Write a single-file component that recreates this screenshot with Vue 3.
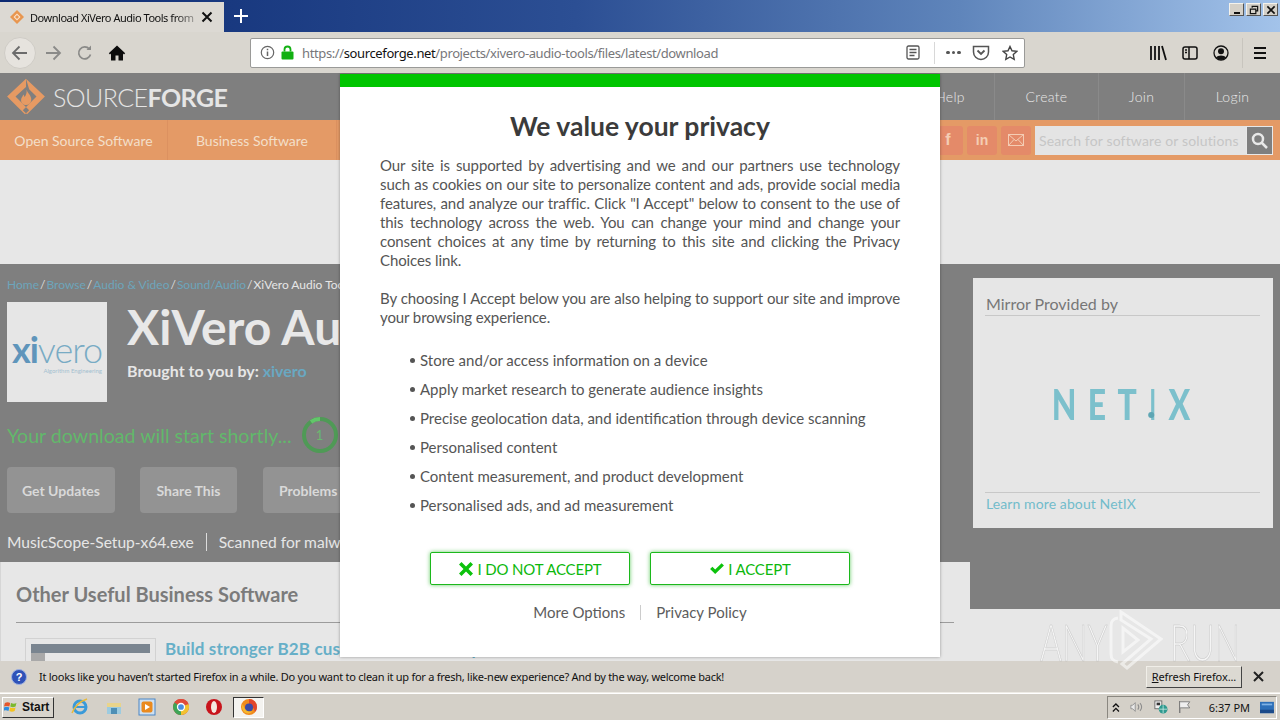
<script setup>
const consentItems = [
  'Store and/or access information on a device',
  'Apply market research to generate audience insights',
  'Precise geolocation data, and identification through device scanning',
  'Personalised content',
  'Content measurement, and product development',
  'Personalised ads, and ad measurement',
]
const crumbs = ['Home', 'Browse', 'Audio & Video', 'Sound/Audio']
const navRight = ['Help', 'Create', 'Join', 'Login']
</script>

<template>
  <div class="screen">
    <!-- browser chrome -->
    <div class="titlebar">
      <div class="tab">
        <svg class="tab-icon" width="16" height="16" viewBox="0 0 16 16">
          <path d="M8 1l7 7-7 7-7-7z" fill="#e8964f" />
          <path d="M8 4.500l3.500 3.500L8 11.500 4.500 8z" fill="#fbe3cc" />
          <path d="M8 6l2 2-2 2-2-2z" fill="#e8964f" />
        </svg>
        <span class="tab-title">Download XiVero Audio Tools from</span>
        <svg class="tab-close" width="12" height="12" viewBox="0 0 12 12">
          <path d="M1.500 1.500l9 9M10.500 1.500l-9 9" stroke="#111" stroke-width="2" />
        </svg>
      </div>
      <svg class="tab-new" width="14" height="14" viewBox="0 0 14 14">
        <path d="M7 0v14M0 7h14" stroke="#fff" stroke-width="2" />
      </svg>
      <div class="win-btns">
        <span class="win-btn"><i class="win-min"></i></span>
        <span class="win-btn">
          <svg width="10" height="10" viewBox="0 0 11 11" fill="none" stroke="#111">
            <path d="M3.500 3V1.500h6v5H7.500" stroke-width="1.300" />
            <path d="M1.500 4.500h6v5h-6z" stroke-width="1.300" />
          </svg>
        </span>
        <span class="win-btn">
          <svg width="10" height="10" viewBox="0 0 11 11">
            <path d="M1.500 1.500l8 8M9.500 1.500l-8 8" stroke="#111" stroke-width="1.800" />
          </svg>
        </span>
      </div>
    </div>

    <div class="toolbar">
      <div class="nav-btns">
        <span class="back-btn">
          <svg width="18" height="18" viewBox="0 0 18 18" fill="none" stroke="#6b6b6b" stroke-width="1.800">
            <path d="M16 9H2M8.500 2.500L2 9l6.500 6.500" />
          </svg>
        </span>
        <svg class="fwd" width="18" height="18" viewBox="0 0 18 18" fill="none" stroke="#8a8a88" stroke-width="1.800">
          <path d="M2 9h14M9.500 2.500L16 9l-6.500 6.500" />
        </svg>
        <svg class="reload" width="18" height="18" viewBox="0 0 18 18" fill="none" stroke="#8a8a88" stroke-width="1.700">
          <path d="M14.500 10.500a6 6 0 1 1-1.200-5.500" />
          <path d="M15 1.500v4.500h-4.500" fill="#8a8a88" stroke="none" />
        </svg>
        <svg class="home" width="18" height="18" viewBox="0 0 18 18">
          <path d="M9 1.500L.8 9.300l1.200 1.200L3 9.600V16.500h4.500V11.500h3V16.500H15V9.600l1 .9 1.200-1.200z" fill="#0c0c0c" />
        </svg>
      </div>

      <div class="urlbar">
        <svg width="15" height="15" viewBox="0 0 15 15" fill="none" stroke="#666" stroke-width="1.200">
          <circle cx="7.500" cy="7.500" r="6.200" />
          <path d="M7.500 6.500v4.500M7.500 3.800v1.500" stroke-width="1.500" />
        </svg>
        <svg class="lock" width="13" height="15" viewBox="0 0 13 15">
          <path d="M3.500 6.500V4.500a3 3 0 0 1 6 0v2" fill="none" stroke="#12b012" stroke-width="1.800" />
          <rect x="0.500" y="6.500" width="12" height="8" rx="1" fill="#12b012" />
        </svg>
        <span class="url"><span class="url-dim">https://</span>sourceforge.net<span class="url-dim">/projects/xivero-audio-tools/files/latest/download</span></span>
        <svg class="reader" width="14" height="15" viewBox="0 0 14 15" fill="none" stroke="#555" stroke-width="1.300">
          <rect x="1" y="1" width="12" height="13" rx="1.500" />
          <path d="M3.500 4.500h7M3.500 7.500h7M3.500 10.500h5" />
        </svg>
        <span class="url-sep"></span>
        <span class="dots"><i></i><i></i><i></i></span>
        <svg class="pocket" width="18" height="16" viewBox="0 0 18 16" fill="none" stroke="#555" stroke-width="1.500">
          <path d="M1.500 1.500h15V7a7.500 7.500 0 0 1-15 0z" />
          <path d="M5.500 5.500L9 9l3.500-3.500" stroke-width="1.800" />
        </svg>
        <svg class="star" width="16" height="16" viewBox="0 0 16 16" fill="none" stroke="#444" stroke-width="1.400">
          <path d="M8 1.500l2 4.300 4.700.6-3.400 3.200.9 4.700L8 12l-4.200 2.300.9-4.700L1.300 6.400 6 5.800z" />
        </svg>
      </div>

      <div class="tools">
        <svg width="18" height="16" viewBox="0 0 18 16" fill="none" stroke="#111" stroke-width="1.800">
          <path d="M2 1v14M6 1v14M10 1v14M13 1l4 14" />
        </svg>
        <svg width="16" height="14" viewBox="0 0 16 14" fill="none" stroke="#111" stroke-width="1.500">
          <rect x="1" y="1" width="14" height="12" rx="2" />
          <path d="M7 1v12M3 4h2M3 6.500h2" />
        </svg>
        <svg width="16" height="16" viewBox="0 0 16 16">
          <circle cx="8" cy="8" r="7" fill="none" stroke="#111" stroke-width="1.300" />
          <circle cx="8" cy="6.200" r="3" fill="#111" />
          <path d="M2.800 12.500a6 4 0 0 1 10.400 0A7 7 0 0 1 2.800 12.500z" fill="#111" />
        </svg>
        <span class="tools-sep"></span>
        <svg width="14" height="12" viewBox="0 0 14 12" stroke="#111" stroke-width="2">
          <path d="M1 1h12M1 6h12M1 11h12" />
        </svg>
      </div>
    </div>

    <!-- page, dimmed behind the consent dialog -->
    <div class="page">
      <header class="sf-header">
        <div class="sf-logo">
          <svg width="42" height="39" viewBox="0 0 40 37">
            <path d="M20 1.500L2 18.500l17 17 4-3.800-13-13.200L20 9.500M20 1.500l18 17-17 17-4-3.800 13-13.200-7-7" fill="#e69a63" />
            <path d="M20.500 12c1 3.500 5 5.500 4.500 10-.3 3-2.500 4.500-5 4.500s-4.700-1.800-4.700-4.500c0-2.500 1.500-3.500 2.200-5.500.8 1 1 2 1.200 2.500C20 17 21 15 20.500 12z" fill="#e69a63" />
          </svg>
          <span class="sf-word">SOURCE<b>FORGE</b></span>
        </div>
        <nav class="sf-top-links">
          <a v-for="l in navRight" :key="l" :class="'link-' + l.toLowerCase()">{{ l }}</a>
        </nav>
      </header>

      <div class="sf-nav">
        <a class="sf-nav-item first">Open Source Software</a>
        <a class="sf-nav-item second">Business Software</a>
        <div class="sf-nav-right">
          <span class="social">f</span>
          <span class="social in">in</span>
          <span class="social">
            <svg width="16" height="12" viewBox="0 0 16 12" fill="none" stroke="#f4cdb4" stroke-width="1">
              <rect x="0.500" y="0.500" width="15" height="11" />
              <path d="M.5 .5L8 7l7.500-6.500M.5 11.500l5.500-6M15.500 11.500l-5.500-6" />
            </svg>
          </span>
          <div class="search">
            <span class="search-text">Search for software or solutions</span>
            <span class="search-btn">
              <svg width="17" height="17" viewBox="0 0 17 17" fill="none" stroke="#e8e8e8" stroke-width="2.500">
                <circle cx="7" cy="7" r="5" />
                <path d="M10.500 10.500L16 16" />
              </svg>
            </span>
          </div>
        </div>
      </div>

      <div class="ad-band"></div>

      <div class="main">
        <div class="left-col">
          <div class="project">
            <div class="crumbs">
              <template v-for="c in crumbs" :key="c"><a>{{ c }}</a><span class="crumb-sep">/</span></template><span class="crumb-current">XiVero Audio Tools</span>
            </div>
            <div class="project-head">
              <div class="project-logo">
                <span class="xi-word"><b>xi</b>vero</span>
                <span class="xi-sub">Algorithm Engineering</span>
              </div>
              <div class="project-text">
                <h1>XiVero Audio Tools</h1>
                <p class="brought">Brought to you by: <a>xivero</a></p>
              </div>
            </div>
            <div class="download-row">
              <span class="shortly">Your download will start shortly...</span>
              <span class="counter">
                <svg width="36" height="36" viewBox="0 0 36 36" fill="none" stroke-width="4">
                  <circle cx="18" cy="18" r="16" stroke="#4f9a56" />
                  <path d="M18 2a16 16 0 0 0-9 2.800" stroke="#62c66a" />
                </svg>
                <span class="counter-num">1</span>
              </span>
            </div>
            <div class="action-row">
              <a class="action a1">Get Updates</a>
              <a class="action a2">Share This</a>
              <a class="action a3">Problems Downloading?</a>
            </div>
            <div class="file-row">
              <span>MusicScope-Setup-x64.exe</span>
              <i class="file-sep"></i>
              <span>Scanned for malware</span>
            </div>
          </div>

          <div class="other-panel">
            <h2>Other Useful Business Software</h2>
            <div class="other-item">
              <div class="thumb">
                <div class="thumb-bar"></div>
                <div class="thumb-rest"></div>
              </div>
              <a class="other-link">Build stronger B2B customer relationships</a>
            </div>
          </div>
        </div>

        <div class="right-col">
          <aside class="mirror">
            <h3>Mirror Provided by</h3>
            <div class="mirror-logo">
              <span class="netix">NET<span class="netix-i">I</span>X</span>
            </div>
            <a class="mirror-link">Learn more about NetIX</a>
          </aside>
          <div class="right-bottom"></div>
        </div>
      </div>

      <!-- consent dialog -->
      <div class="modal">
        <div class="modal-top"></div>
        <div class="modal-body">
          <h2 class="modal-title">We value your privacy</h2>
          <p class="modal-p">Our site is supported by advertising and we and our partners use technology such as cookies on our site to personalize content and ads, provide social media features, and analyze our traffic. Click "I Accept" below to consent to the use of this technology across the web. You can change your mind and change your consent choices at any time by returning to this site and clicking the Privacy Choices link.</p>
          <p class="modal-p second-p">By choosing I Accept below you are also helping to support our site and improve your browsing experience.</p>
          <ul class="consent-list">
            <li v-for="item in consentItems" :key="item">{{ item }}</li>
          </ul>
          <div class="modal-btns">
            <button class="consent-btn">
              <svg width="16" height="16" viewBox="0 0 16 16">
                <path d="M1 3.500L3.500 1 8 5.500 12.500 1 15 3.500 10.500 8l4.500 4.500-2.500 2.500L8 10.500 3.500 15 1 12.500 5.500 8z" fill="#0cc20c" />
              </svg>
              <span>I DO NOT ACCEPT</span>
            </button>
            <button class="consent-btn">
              <svg width="16" height="13" viewBox="0 0 15 12">
                <path d="M1 6.500L3.200 4.300 5.800 6.900 11.800 1 14 3.200 5.800 11.200z" fill="#0cc20c" />
              </svg>
              <span>I ACCEPT</span>
            </button>
          </div>
          <div class="modal-links">
            <a>More Options</a>
            <i></i>
            <a>Privacy Policy</a>
          </div>
        </div>
      </div>
    </div>

    <!-- firefox notification -->
    <div class="notify">
      <svg class="notify-icon" width="16" height="16" viewBox="0 0 16 16">
        <circle cx="8" cy="8" r="7.500" fill="#2f52b8" stroke="#9db0e0" />
        <text x="8" y="12" text-anchor="middle" font-family="Liberation Sans, sans-serif" font-size="11" font-weight="700" fill="#fff">?</text>
      </svg>
      <span class="notify-text">It looks like you haven’t started Firefox in a while. Do you want to clean it up for a fresh, like-new experience? And by the way, welcome back!</span>
      <button class="refresh-btn"><span><u>R</u>efresh Firefox...</span></button>
      <svg class="notify-close" width="11" height="11" viewBox="0 0 11 11">
        <path d="M1 1l9 9M10 1l-9 9" stroke="#222" stroke-width="2" />
      </svg>
    </div>

    <!-- windows taskbar -->
    <div class="taskbar">
      <button class="start">
        <svg width="16" height="14" viewBox="0 0 18 15">
          <path d="M1 3c2-1 4-1 6 0L6 7C4 6 2 6 0 7z" fill="#e5562b" />
          <path d="M8 3c2 1 4 1 6 0l-1 4c-2 1-4 1-6 0z" fill="#7cb92d" />
          <path d="M0 8c2-1 4-1 6 0l-1 4c-2-1-4-1-6 0z" fill="#2d8ce0" />
          <path d="M7 8c2 1 4 1 6 0l-1 4c-2 1-4 1-6 0z" fill="#f4c21f" />
        </svg>
        <span>Start</span>
      </button>
      <div class="quick">
        <svg width="18" height="18" viewBox="0 0 18 18" fill="none">
          <circle cx="9" cy="9" r="6" stroke="#3a9ad9" stroke-width="3" />
          <path d="M4 9h10" stroke="#3a9ad9" stroke-width="2" />
          <path d="M1 15C4 8 10 3 16 1" stroke="#e8b93a" stroke-width="1.500" />
        </svg>
        <svg width="18" height="18" viewBox="0 0 18 18">
          <path d="M2 5h14v11H2z" fill="#9ccbe0" />
          <path d="M2 5h14v4H2z" fill="#e9d48a" />
          <path d="M6 10h6v6H6z" fill="#4e8fb5" />
        </svg>
        <svg width="18" height="18" viewBox="0 0 18 18">
          <rect x="1" y="1" width="16" height="16" fill="#cfe0f0" stroke="#4a86c5" />
          <rect x="3.500" y="3.500" width="11" height="11" rx="2" fill="#ea8a1e" />
          <path d="M7 6l5 3-5 3z" fill="#fff" />
        </svg>
        <svg width="18" height="18" viewBox="0 0 18 18">
          <circle cx="9" cy="9" r="8" fill="#d8453a" />
          <path d="M9 9L16.500 6A8 8 0 0 0 2.500 4.500z" fill="#e04b3a" />
          <path d="M9 9l7.500-3A8 8 0 0 1 9 17z" fill="#f2c230" />
          <path d="M9 9v8A8 8 0 0 1 2.500 4.500z" fill="#3fa557" />
          <circle cx="9" cy="9" r="3.500" fill="#4a8fe0" stroke="#fff" stroke-width="1.300" />
        </svg>
        <svg width="18" height="18" viewBox="0 0 18 18">
          <circle cx="9" cy="9" r="8" fill="#c8141c" />
          <ellipse cx="9" cy="9" rx="3" ry="6" fill="#f4e8e0" />
        </svg>
      </div>
      <div class="task-firefox">
        <svg width="18" height="18" viewBox="0 0 18 18">
          <circle cx="9" cy="9" r="8" fill="#f08a1d" />
          <path d="M9 1a8 8 0 0 1 8 8c0 2-1 4-2 5-1-4-3-6-6-8z" fill="#e2452c" />
          <circle cx="9" cy="9.500" r="4" fill="#3a4ca8" />
          <path d="M3 6c1 6 5 9 10 7-3 4-10 3-11-3 0-2 0-3 1-4z" fill="#f5b82e" />
        </svg>
      </div>
      <div class="tray">
        <svg width="9" height="11" viewBox="0 0 9 11" fill="none" stroke="#111" stroke-width="1.500">
          <path d="M1 5l3.500-3.500L8 5M1 10l3.500-3.500L8 10" />
        </svg>
        <svg width="16" height="14" viewBox="0 0 16 14" fill="none" stroke="#8d8d8d">
          <path d="M1 5h2l3-3v10L3 9H1z" fill="#e8e8e8" />
          <path d="M9 4c1.500 2 1.500 4 0 6M11.500 2.500c2.500 3 2.500 6 0 9" stroke-width="1.200" />
        </svg>
        <svg width="16" height="16" viewBox="0 0 16 16">
          <rect x="1" y="1" width="8" height="9" fill="#f0f0f0" stroke="#666" />
          <rect x="3" y="3" width="4" height="3" fill="#333" />
          <circle cx="10.500" cy="10.500" r="5" fill="#2f9a8f" />
          <path d="M6 10.500h9M10.500 6v9" stroke="#bfe6e0" />
        </svg>
        <svg width="15" height="16" viewBox="0 0 15 16" fill="none" stroke="#777">
          <path d="M2 1v14" stroke-width="1.500" />
          <path d="M2.500 2h11l-2.500 3.500 2.500 3.500h-11" fill="#efefef" />
        </svg>
        <span class="clock">6:37 PM</span>
        <svg width="16" height="13" viewBox="0 0 16 13">
          <rect width="16" height="13" fill="#2d6fb8" />
          <rect y="9" width="16" height="4" fill="#1c4b8a" />
          <rect x="2" y="2" width="12" height="2" fill="#7fb2e5" />
        </svg>
      </div>
    </div>

    <!-- watermark, drawn over everything -->
    <div class="watermark">
      <span class="wm-text">ANY</span>
      <svg class="wm-logo" width="54" height="60" viewBox="0 0 54 60" fill="none" stroke="#fff" stroke-opacity=".55" stroke-width="3">
        <path d="M9 8C3 9 2 12 2 16v28c0 5 2 7 7 8" />
        <path d="M12 2l40 27-34 29-5-4 29-25L12 10z" />
        <path d="M14 18v24l15-12z" />
      </svg>
      <span class="wm-text run">RUN</span>
    </div>
  </div>
</template>

<style>
html, body { margin: 0; overflow: hidden; }
</style>

<style scoped>
.screen {
  position: relative;
  width: 1280px;
  height: 720px;
  display: flex;
  flex-direction: column;
  overflow: hidden;
  font-family: Lato, "Liberation Sans", sans-serif;
  background: #d4d0c8;
}

/* ── Title bar ── */
.titlebar {
  height: 32px;
  flex-shrink: 0;
  display: flex;
  align-items: flex-end;
  background: linear-gradient(90deg, #0c2a72 0%, #2c4f94 45%, #5f85bb 75%, #a3c3ea 100%);
}
.tab {
  width: 224px;
  height: 30px;
  box-sizing: border-box;
  display: flex;
  align-items: center;
  padding: 0 10px 0 9px;
  background: #dcd9d3;
}
.tab-icon { flex-shrink: 0; }
.tab-title {
  margin-left: 5px;
  width: 164px;
  white-space: nowrap;
  font: 11px "Noto Sans", sans-serif;
  letter-spacing: -0.47px;
  color: #111;
  -webkit-mask-image: linear-gradient(90deg, #000 88%, rgba(0, 0, 0, 0.35));
  mask-image: linear-gradient(90deg, #000 88%, rgba(0, 0, 0, 0.35));
}
.tab-close { margin-left: 7px; flex-shrink: 0; }
.tab-new { margin: 0 0 9px 10px; }
.win-btns {
  margin-left: auto;
  align-self: flex-start;
  display: flex;
  gap: 2px;
  padding: 3px 2px 0 0;
}
.win-btn {
  width: 13px;
  height: 11px;
  display: flex;
  align-items: center;
  justify-content: center;
  background: #d4d0c8;
  border: 1px solid;
  border-color: #f4f2ec #555 #555 #f4f2ec;
  box-sizing: content-box;
}
.win-min { width: 6px; height: 2px; background: #111; margin-top: 7px; }

/* ── Toolbar ── */
.toolbar {
  height: 41px;
  flex-shrink: 0;
  display: flex;
  align-items: center;
  background: #d9d6cf;
}
.nav-btns {
  width: 250px;
  height: 100%;
  display: flex;
  align-items: center;
  padding-left: 4px;
  box-sizing: border-box;
}
.back-btn {
  width: 32px;
  height: 32px;
  border-radius: 50%;
  display: flex;
  align-items: center;
  justify-content: center;
  background: #e6e3de;
  border: 1px solid #cfccc6;
  box-sizing: border-box;
}
.fwd { margin-left: 8px; }
.reload { margin-left: 14px; }
.home { margin-left: 14px; }
.urlbar {
  width: 775px;
  height: 30px;
  box-sizing: border-box;
  display: flex;
  align-items: center;
  padding-left: 9px;
  background: #fff;
  border: 1px solid #9a9a98;
  border-radius: 2px;
}
.lock { margin-left: 6px; }
.url {
  margin-left: 8px;
  width: 599px;
  flex-shrink: 0;
  white-space: nowrap;
  font: 13px "Noto Sans", sans-serif;
  letter-spacing: -0.38px;
  color: #111;
}
.url-dim { color: #77777a; }
.reader { margin-left: 5px; }
.url-sep { width: 1px; height: 22px; background: #d8d8d8; margin-left: 14px; }
.dots { display: flex; gap: 2px; margin-left: 11px; }
.dots i { width: 3.500px; height: 3.500px; border-radius: 50%; background: #555; }
.pocket { margin-left: 11px; }
.star { margin-left: 12px; }
.tools {
  flex: 1;
  display: flex;
  align-items: center;
  padding-left: 124px;
  gap: 15px;
}
.tools-sep { width: 1px; height: 30px; background: #c8c5be; margin: 0 -5px 0 -2px; }

/* ── Page ── */
.page {
  height: 588px;
  flex-shrink: 0;
  position: relative;
  overflow: hidden;
  background: #7f7f7f;
}
.sf-header {
  height: 47px;
  display: flex;
  align-items: center;
  justify-content: space-between;
  background: #7f7f7f;
}
.sf-logo {
  display: flex;
  align-items: center;
  padding-left: 5px;
}
.sf-word {
  margin-left: 6px;
  font-size: 25px;
  font-weight: 300;
  letter-spacing: -0.55px;
  color: #e5e5e5;
}
.sf-word b { font-weight: 700; }
.sf-top-links {
  display: flex;
  height: 100%;
}
.sf-top-links a {
  display: flex;
  align-items: center;
  justify-content: center;
  height: 100%;
  box-sizing: border-box;
  font-size: 14px;
  letter-spacing: 0.3px;
  font-weight: 300;
  color: #e8e8e8;
  border-left: 1px solid #8a8a8a;
}
.sf-top-links .link-help { border-left: 0; width: 88px; }
.sf-top-links .link-create { width: 104px; }
.sf-top-links .link-join { width: 86px; }
.sf-top-links .link-login { width: 96px; }
.sf-nav {
  height: 40px;
  display: flex;
  align-items: center;
  background: #e49a66;
}
.sf-nav-item {
  height: 100%;
  display: flex;
  align-items: center;
  justify-content: center;
  font-size: 14px;
  color: #f3dfc9;
  border-right: 1px solid #dc9160;
}
.first { width: 167px; }
.second { width: 168px; }
.sf-nav-right {
  margin-left: auto;
  height: 100%;
  display: flex;
  align-items: center;
  padding-right: 7px;
}
.social {
  width: 30px;
  height: 29px;
  margin-right: 4px;
  border-radius: 3px;
  display: flex;
  align-items: center;
  justify-content: center;
  background: #e48a69;
  color: #f4cdb4;
  font: 700 16px "Liberation Sans", sans-serif;
}
.social.in { font-size: 14px; }
.search {
  width: 238px;
  height: 29px;
  display: flex;
  align-items: center;
  background: #e4e4e4;
}
.search-text {
  flex: 1;
  padding-left: 4px;
  font-size: 14px;
  letter-spacing: 0.15px;
  color: #c6c6c6;
  white-space: nowrap;
}
.search-btn {
  width: 25px;
  height: 27px;
  display: flex;
  align-items: center;
  justify-content: center;
  background: #7f7f7f;
  border: 1px solid #e8e8e8;
}
.ad-band {
  height: 104px;
  background: #e7e7e7;
}
.main {
  height: 397px;
  display: flex;
}
.left-col {
  width: 970px;
  display: flex;
  flex-direction: column;
  overflow: hidden;
}
.project {
  height: 298px;
  padding: 13px 0 0 7px;
  box-sizing: border-box;
  overflow: hidden;
}
.crumbs {
  font-size: 12px;
  line-height: 16px;
  white-space: nowrap;
  color: #6da5bb;
}
.crumb-sep { color: #dcdcdc; margin: 0 1px; }
.crumb-current { color: #e6e6e6; }
.project-head {
  display: flex;
  margin-top: 9px;
}
.project-logo {
  width: 100px;
  height: 100px;
  flex-shrink: 0;
  display: flex;
  flex-direction: column;
  align-items: center;
  justify-content: center;
  background: #e6e6e6;
}
.xi-word {
  font-size: 36px;
  line-height: 36px;
  font-weight: 300;
  letter-spacing: -1px;
  color: #78abc4;
}
.xi-word b { font-weight: 700; color: #5f95bb; }
.xi-sub {
  font-size: 6px;
  line-height: 7px;
  color: #a4c0d0;
  align-self: flex-end;
  margin-right: 5px;
}
.project-text { margin-left: 20px; }
h1 {
  margin: -2px 0 0;
  font-size: 48px;
  line-height: 54px;
  font-weight: 700;
  white-space: nowrap;
  color: #e8e8e8;
}
.brought {
  margin: 6px 0 0;
  font-size: 16px;
  line-height: 22px;
  font-weight: 700;
  color: #e6e6e6;
}
.brought a { color: #69a8c2; }
.download-row {
  display: flex;
  align-items: center;
  margin-top: 13px;
  height: 40px;
}
.shortly {
  font-size: 19.600px;
  color: #62b86b;
  white-space: nowrap;
}
.counter {
  position: relative;
  width: 36px;
  height: 36px;
  margin-left: 10px;
  display: flex;
  flex-shrink: 0;
  align-items: center;
  justify-content: center;
}
.counter svg { position: absolute; inset: 0; }
.counter-num { font-size: 13px; color: #69b870; }
.action-row {
  display: flex;
  margin-top: 12px;
  white-space: nowrap;
}
.action {
  height: 46px;
  display: flex;
  align-items: center;
  justify-content: center;
  border-radius: 4px;
  font-size: 14px;
  font-weight: 700;
  color: #d9d9d9;
  background: #939393;
  flex-shrink: 0;
}
.a1 { width: 108px; }
.a2 { width: 97px; margin-left: 25px; }
.a3 { padding: 0 16px; margin-left: 26px; justify-content: flex-start; }
.file-row {
  display: flex;
  align-items: center;
  margin-top: 18px;
  font-size: 15.600px;
  line-height: 22px;
  color: #e6e6e6;
  white-space: nowrap;
}
.file-sep { width: 1px; height: 18px; background: #dcdcdc; margin: 0 12px; }
.other-panel {
  flex: 1;
  background: #e7e7e7;
  border-left: 1px solid #d6d6d6;
  padding: 17px 16px 0 15px;
  overflow: hidden;
}
.other-panel h2 {
  margin: 0;
  padding-bottom: 13px;
  font-size: 20px;
  line-height: 30px;
  font-weight: 700;
  color: #7b7b7b;
  border-bottom: 1px solid #9c9c9c;
}
.other-item {
  display: flex;
  align-items: flex-start;
  margin: 15px 0 0 9px;
}
.thumb {
  width: 131px;
  height: 40px;
  padding: 5px 5px 0;
  box-sizing: border-box;
  border: 1px solid #d2d2d2;
  flex-shrink: 0;
}
.thumb-bar { height: 9px; background: #7a8590; }
.thumb-rest { height: 12px; width: 14px; background: #a9a9a9; }
.other-link {
  margin-left: 9px;
  font-size: 17px;
  letter-spacing: 0.15px;
  line-height: 21px;
  font-weight: 700;
  color: #66afc8;
  white-space: nowrap;
}
.right-col {
  flex: 1;
  display: flex;
  flex-direction: column;
}
.mirror {
  width: 300px;
  height: 250px;
  box-sizing: border-box;
  margin: 14px 0 0 3px;
  padding: 15px 13px 0 12px;
  background: #e6e6e6;
  display: flex;
  flex-direction: column;
}
.mirror h3 {
  margin: 0;
  padding: 0 1px 1px;
  font-size: 16px;
  line-height: 21px;
  font-weight: 400;
  color: #777;
  border-bottom: 1px solid #c8c8c8;
}
.mirror-logo {
  height: 177px;
  padding-left: 8px;
  box-sizing: border-box;
  display: flex;
  align-items: center;
  justify-content: center;
  border-bottom: 1px solid #c8c8c8;
}
.netix {
  display: inline-block;
  font-size: 42px;
  line-height: 42px;
  font-weight: 900;
  letter-spacing: 15px;
  color: #7cc0cc;
  white-space: nowrap;
  transform: scaleX(0.76);
}
.netix-i {
  position: relative;
  display: inline-block;
  font-weight: 400;
}
.netix-i::after {
  content: "";
  position: absolute;
  left: 0;
  bottom: 7px;
  width: 8px;
  height: 6px;
  border-radius: 50%;
  background: #5ea6b4;
}
.mirror-link {
  margin-top: 1px;
  padding-left: 1px;
  font-size: 14px;
  letter-spacing: 0.1px;
  line-height: 20px;
  color: #72bccb;
}
.right-bottom {
  margin-top: 81px;
  flex: 1;
  background: #e7e7e7;
}

/* ── Watermark ── */
.watermark {
  position: absolute;
  left: 1040px;
  top: 610px;
  display: flex;
  align-items: center;
  height: 60px;
}
.wm-text {
  width: 62px;
  font: 300 51px/44px Lato, sans-serif;
  color: rgba(255, 255, 255, 0.6);
  -webkit-text-stroke: 0.6px rgba(165, 165, 165, 0.55);
  transform: scaleX(0.66);
  transform-origin: left center;
  white-space: nowrap;
  margin-top: 4px;
}
.wm-text.run { margin-left: -2px; }
.wm-logo { margin: 0 9px 0 7px; flex-shrink: 0; }

/* ── Consent dialog ── */
.modal {
  position: absolute;
  left: 340px;
  top: 1px;
  width: 600px;
  height: 583px;
  background: #fff;
  box-shadow: 0 0 3px rgba(0, 0, 0, 0.35);
}
.modal-top { height: 13px; background: #00c500; }
.modal-body { padding: 0 40px; }
.modal-title {
  margin: 0;
  padding-top: 24px;
  text-align: center;
  font-size: 26.500px;
  line-height: 30px;
  font-weight: 700;
  color: #3b3b3b;
}
.modal-p {
  margin: 15px 0 0;
  font-size: 15px;
  letter-spacing: -0.1px;
  line-height: 19px;
  text-align: justify;
  color: #555;
}
.second-p { margin-top: 19px; }
.consent-list {
  list-style: none;
  margin: 19px 0 0;
  padding: 0 0 0 40px;
}
.consent-list li {
  position: relative;
  height: 29px;
  font-size: 15px;
  line-height: 29px;
  color: #555;
  white-space: nowrap;
}
.consent-list li::before {
  content: "";
  position: absolute;
  left: -10px;
  top: 12px;
  width: 5px;
  height: 5px;
  border-radius: 50%;
  background: #555;
}
.modal-btns {
  display: flex;
  justify-content: center;
  gap: 20px;
  margin-top: 32px;
}
.consent-btn {
  width: 200px;
  height: 33px;
  display: flex;
  align-items: center;
  justify-content: center;
  gap: 3px;
  padding: 0;
  background: #fff;
  border: 1px solid #1cb81c;
  border-radius: 2px;
  box-shadow: 0 0 4px rgba(0, 170, 0, 0.6);
  font: 15px Lato, sans-serif;
  letter-spacing: -0.15px;
  color: #0cb80c;
}
.modal-links {
  display: flex;
  justify-content: center;
  align-items: center;
  margin-top: 17px;
  font-size: 15px;
  line-height: 20px;
  color: #5c5c5c;
}
.modal-links i {
  width: 1px;
  height: 15px;
  background: #ccc;
  margin: 0 15px;
}

/* ── Notification ── */
.notify {
  height: 32px;
  flex-shrink: 0;
  display: flex;
  align-items: center;
  padding-left: 11px;
  background: #d6d2cb;
  border-bottom: 1px solid #efece6;
  box-sizing: border-box;
}
.notify-text {
  margin-left: 12px;
  margin-top: -1px;
  font: 11px "Noto Sans", sans-serif;
  letter-spacing: -0.26px;
  color: #111;
  white-space: nowrap;
  width: 1107px;
}
.refresh-btn {
  width: 96px;
  height: 22px;
  padding: 0;
  background: #dcd9d2;
  border: 1px solid;
  border-color: #f0eee8 #444 #444 #f0eee8;
  font: 11px "Noto Sans", sans-serif;
  letter-spacing: -0.1px;
  color: #111;
}
.notify-close { margin-left: 11px; }

/* ── Taskbar ── */
.taskbar {
  height: 27px;
  flex-shrink: 0;
  display: flex;
  align-items: center;
  background: #d4d0c8;
  border-top: 1px solid #fff;
  box-sizing: border-box;
}
.start {
  width: 52px;
  height: 21px;
  margin-left: 2px;
  display: flex;
  align-items: center;
  gap: 2px;
  padding: 0 0 0 1px;
  background: #d8d4cc;
  border: 1px solid;
  border-color: #fff #333 #333 #fff;
  font: 700 12px "Liberation Sans", sans-serif;
  color: #111;
}
.quick {
  display: flex;
  align-items: center;
  gap: 15.600px;
  margin-left: 17px;
}
.task-firefox {
  width: 31px;
  height: 21px;
  margin-left: 10px;
  display: flex;
  align-items: center;
  justify-content: center;
  background: #f4f3f0;
  border: 1px solid;
  border-color: #333 #fff #fff #333;
  box-sizing: border-box;
}
.tray {
  margin-left: auto;
  margin-right: 3px;
  width: 170px;
  height: 23px;
  box-sizing: border-box;
  display: flex;
  align-items: center;
  gap: 10px;
  padding: 0 2px 0 4px;
  border: 1px solid;
  border-color: #8a8780 #fff #fff #8a8780;
}
.clock {
  margin-left: 8px;
  width: 46px;
  font: 11px "Noto Sans", sans-serif;
  color: #111;
  white-space: nowrap;
}
</style>
